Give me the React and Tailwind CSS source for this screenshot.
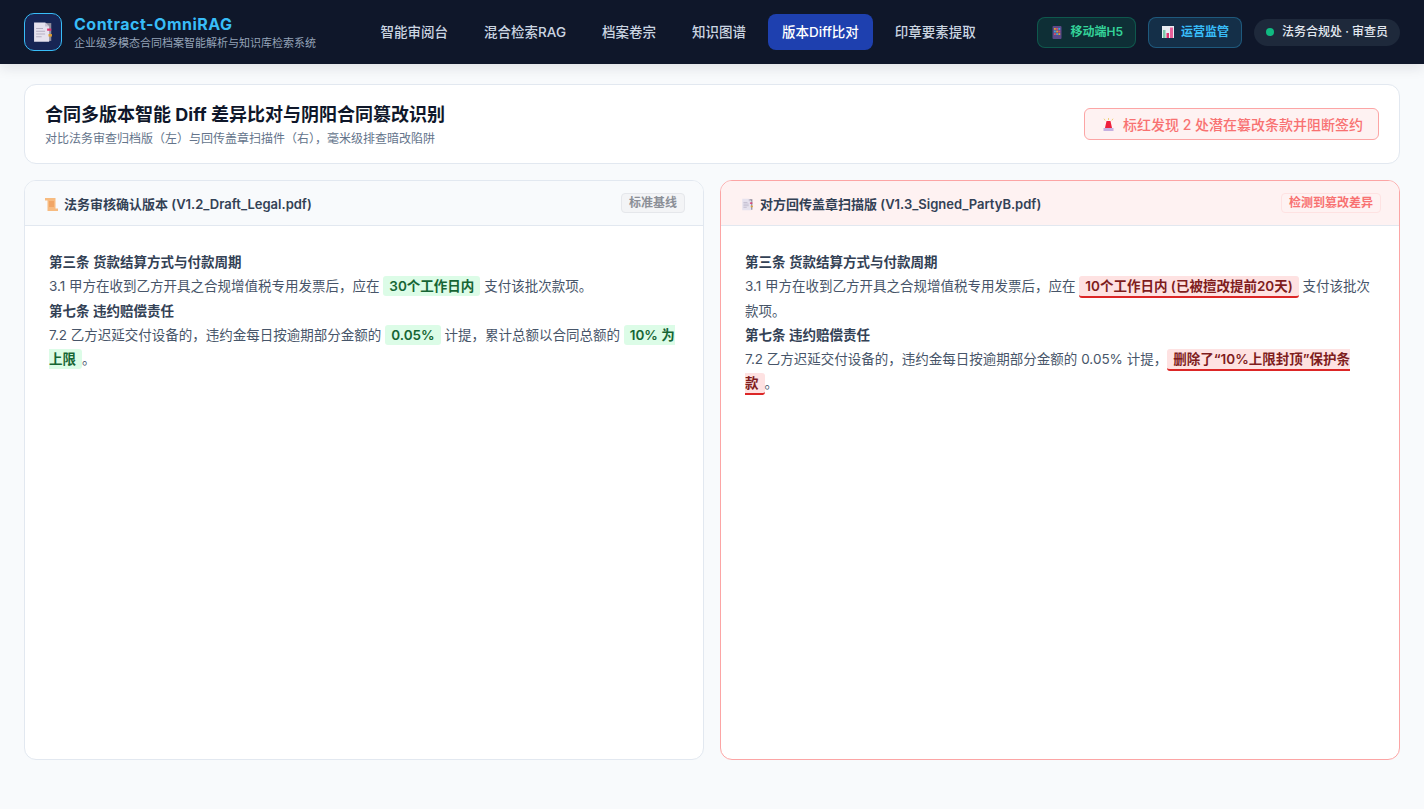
import React from 'react'

const navItems = ['智能审阅台', '混合检索RAG', '档案卷宗', '知识图谱', '版本Diff比对', '印章要素提取']

function DocIcon({ className }) {
    return (
        <svg viewBox="0 0 16 16" className={className}>
            <rect x="4" y="1.500" width="10" height="13" fill="#8f8d9c" />
            <path d="M1.500 1h8L12.500 4v11h-11z" fill="#e6e2ee" />
            <path d="M9.500 1l3 3h-3z" fill="#c9c3d4" />
            <path d="M3 5.500h5M3 7.500h6.500M3 9.500h6.500M3 11.500h4" stroke="#b5afc2" strokeWidth="0.8" />
            <rect x="11" y="5.500" width="3" height="1.600" fill="#e0336e" />
            <rect x="12" y="9.500" width="2.500" height="1.800" fill="#e0a030" />
        </svg>
    )
}

function PhoneIcon() {
    return (
        <svg viewBox="0 0 10 13" className="w-[10px] h-[13px]">
            <rect x="0.500" y="0" width="9" height="13" rx="1" fill="#5b4a8a" />
            <rect x="2" y="2" width="1.800" height="1.800" fill="#e0a030" />
            <rect x="4.200" y="2" width="1.800" height="1.800" fill="#d9506a" />
            <rect x="6.400" y="2" width="1.800" height="1.800" fill="#3fa7d6" />
            <rect x="2" y="4.600" width="1.800" height="1.800" fill="#3fa7d6" />
            <rect x="4.200" y="4.600" width="1.800" height="1.800" fill="#e0a030" />
            <rect x="6.400" y="4.600" width="1.800" height="1.800" fill="#d9506a" />
            <rect x="2" y="7.200" width="1.800" height="1.800" fill="#d9506a" />
            <rect x="4.200" y="7.200" width="1.800" height="1.800" fill="#3fa7d6" />
            <rect x="6.400" y="7.200" width="1.800" height="1.800" fill="#e0a030" />
        </svg>
    )
}

function ChartIcon() {
    return (
        <svg viewBox="0 0 12 12" className="w-[12px] h-[12px]">
            <rect width="12" height="12" fill="#e8ecf2" />
            <rect x="1" y="4" width="2.500" height="8" fill="#7cc8a8" />
            <rect x="4.500" y="7" width="2.500" height="5" fill="#e0336e" />
            <rect x="8" y="1.500" width="3" height="10.500" fill="#e8609a" />
        </svg>
    )
}

function SirenIcon() {
    return (
        <svg viewBox="0 0 11 13" className="w-[11px] h-[13px]">
            <path d="M5.500 0v2M1 .7l1.200 1.800M10 .7 8.800 2.500" stroke="#e8c860" strokeWidth="0.8" />
            <path d="M3.500 3h4l1.500 7H2z" fill="#ee1f3c" />
            <rect x="0.500" y="10" width="10" height="3" fill="#c5b0e0" />
        </svg>
    )
}

function ScrollIcon() {
    return (
        <svg viewBox="0 0 13 13" className="w-[13px] h-[13px]">
            <path d="M0 0h10.500v10.500H13V13H2.500V2.500H0z" fill="#f7bb80" />
            <path d="M4 4h5M4 6h5M4 8h5" stroke="#e8863e" strokeWidth="0.8" />
        </svg>
    )
}

function Good({ children }) {
    return (
        <span className="bg-[#dcfce7] text-[#166534] font-semibold px-[6px] py-[2px] rounded-[3px]">
            {children}
        </span>
    )
}

function Bad({ children }) {
    return (
        <span className="bg-[#fee2e2] text-[#7f1d1d] font-semibold px-[6px] py-[2px] rounded-[3px] border-b-2 border-[#dc2626]">
            {children}
        </span>
    )
}

export default function App() {
    return (
        <div className="min-h-[809px] bg-[#f8fafc] text-[#0f172a] font-['Inter','Noto_Sans_CJK_SC',sans-serif]">
            {/* Header */}
            <header className="h-16 bg-[#0f172a] px-6 flex items-center justify-between shadow-[0_4px_12px_rgba(15,23,42,0.1)]">
                <div className="flex items-center gap-3">
                    <div className="w-[38px] h-[38px] rounded-[10px] border border-[#38bdf8] bg-[#172554] flex items-center justify-center">
                        <DocIcon className="w-[22px] h-[22px]" />
                    </div>
                    <div className="flex flex-col">
                        <div className="text-[16px] leading-[20px] font-bold text-[#38bdf8] tracking-[0.5px]">Contract-OmniRAG</div>
                        <div className="text-[11px] leading-[14px] mt-[2px] text-[#94a3b8]">企业级多模态合同档案智能解析与知识库检索系统</div>
                    </div>
                </div>

                <nav className="flex items-center gap-2 ml-[3px]">
                    {navItems.map((item) => (
                        <div
                            key={item}
                            className={
                                item === '版本Diff比对'
                                    ? 'h-9 px-[14px] flex items-center rounded-lg text-[13.500px] font-medium bg-[#1e40af] text-white'
                                    : 'h-9 px-[14px] flex items-center rounded-lg text-[13.500px] font-medium text-[#cbd5e1]'
                            }
                        >
                            {item}
                        </div>
                    ))}
                </nav>

                <div className="flex items-center gap-3">
                    <div className="h-[31px] px-3 flex items-center gap-[6px] rounded-lg border border-[#10b981]/30 bg-[#10b981]/15 text-[12px] font-semibold text-[#34d399]">
                        <span className="w-[14px] flex justify-center"><PhoneIcon /></span>
                        移动端H5
                    </div>
                    <div className="h-[31px] px-3 flex items-center gap-[6px] rounded-lg border border-[#38bdf8]/30 bg-[#38bdf8]/15 text-[12px] font-semibold text-[#38bdf8]">
                        <span className="w-[14px] flex justify-center"><ChartIcon /></span>
                        运营监管
                    </div>
                    <div className="h-[27px] px-3 flex items-center gap-2 rounded-full bg-[#1e293b] text-[12px] font-medium text-[#e2e8f0]">
                        <span className="w-2 h-2 rounded-full bg-[#10b981]" />
                        法务合规处 · 审查员
                    </div>
                </div>
            </header>

            <main className="px-6 pt-5">
                {/* Title card */}
                <section className="h-20 bg-white border border-[#e2e8f0] rounded-xl px-5 flex items-center justify-between">
                    <div>
                        <h1 className="text-[18px] leading-[26px] font-bold text-[#0f172a]">合同多版本智能 Diff 差异比对与阴阳合同篡改识别</h1>
                        <p className="text-[12px] leading-[16px] mt-[3px] text-[#64748b]">对比法务审查归档版（左）与回传盖章扫描件（右），毫米级排查暗改陷阱</p>
                    </div>
                    <div className="h-8 px-[15px] flex items-center gap-[5px] bg-[#fef2f2] border border-[#fca5a5] rounded-md text-[14px] font-medium text-[#f87171]">
                        <span className="w-[18px] flex justify-center"><SirenIcon /></span>
                        标红发现 2 处潜在篡改条款并阻断签约
                    </div>
                </section>

                {/* Diff panels */}
                <div className="grid grid-cols-2 gap-4 mt-4 h-[580px]">
                    <section className="bg-white border border-[#e2e8f0] rounded-xl overflow-hidden">
                        <div className="h-[45px] pl-5 pr-[18px] bg-[#f8fafc] border-b border-[#e2e8f0] flex items-center justify-between">
                            <div className="flex items-center gap-[6px] pt-[3px] text-[13px] font-semibold text-[#334155]">
                                <ScrollIcon />
                                法务审核确认版本 (V1.2_Draft_Legal.pdf)
                            </div>
                            <span className="h-5 px-[7px] flex items-center rounded bg-[#f3f4f6] border border-[#e5e7eb] text-[12px] font-semibold text-[#8b8f97]">标准基线</span>
                        </div>
                        <div className="px-6 pt-[24px] text-[13.500px] leading-[24.300px] text-[#475569]">
                            <div className="font-semibold text-[#334155]">第三条 货款结算方式与付款周期</div>
                            <div>3.1 甲方在收到乙方开具之合规增值税专用发票后，应在 <Good>30个工作日内</Good> 支付该批次款项。</div>
                            <div className="font-semibold text-[#334155]">第七条 违约赔偿责任</div>
                            <div>7.2 乙方迟延交付设备的，违约金每日按逾期部分金额的 <Good>0.05%</Good> 计提，累计总额以合同总额的 <Good>10% 为上限</Good>。</div>
                        </div>
                    </section>

                    <section className="bg-white border border-[#fca5a5] rounded-xl overflow-hidden">
                        <div className="h-[45px] pl-5 pr-[18px] bg-[#fef2f2] border-b border-[#e2e8f0] flex items-center justify-between">
                            <div className="flex items-center gap-[6px] pt-[3px] text-[13px] font-semibold text-[#334155]">
                                <DocIcon className="w-[13px] h-[13px]" />
                                对方回传盖章扫描版 (V1.3_Signed_PartyB.pdf)
                            </div>
                            <span className="h-5 px-[7px] flex items-center rounded bg-[#fef2f2] border border-[#fee2e2] text-[12px] font-semibold text-[#f87171]">检测到篡改差异</span>
                        </div>
                        <div className="px-6 pt-[24px] text-[13.500px] leading-[24.300px] text-[#475569]">
                            <div className="font-semibold text-[#334155]">第三条 货款结算方式与付款周期</div>
                            <div>3.1 甲方在收到乙方开具之合规增值税专用发票后，应在 <Bad>10个工作日内 (已被擅改提前20天)</Bad> 支付该批次款项。</div>
                            <div className="font-semibold text-[#334155]">第七条 违约赔偿责任</div>
                            <div>7.2 乙方迟延交付设备的，违约金每日按逾期部分金额的 0.05% 计提，<Bad>删除了“10%上限封顶”保护条款</Bad>。</div>
                        </div>
                    </section>
                </div>
            </main>
        </div>
    )
}
